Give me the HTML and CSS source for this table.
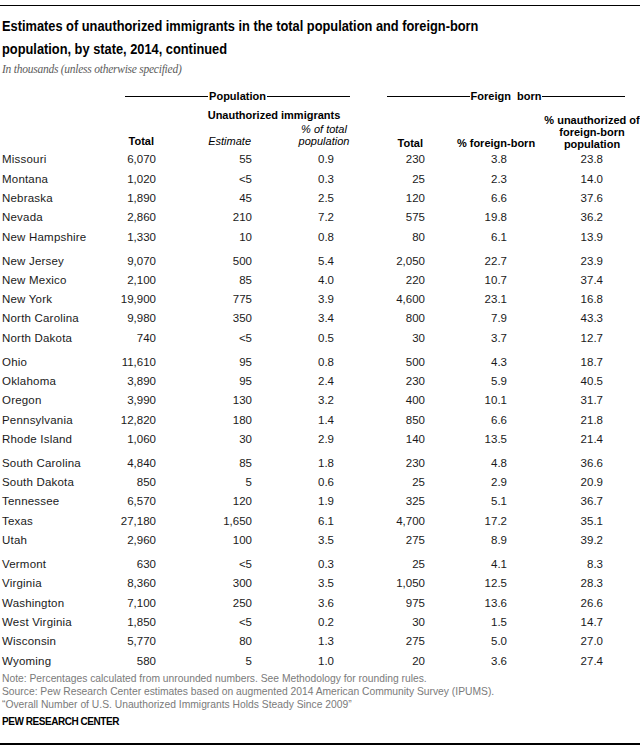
FILE: index.html
```html
<!DOCTYPE html>
<html lang="en">
<head>
<meta charset="utf-8">
<title>Unauthorized immigrants by state, 2014, continued</title>
<link rel="stylesheet" href="styles.css">
</head>
<body>
<div class="page">
  <h1 class="title">Estimates of unauthorized immigrants in the total population and foreign-born<br>population, by state, 2014, continued</h1>
  <p class="subtitle">In thousands (unless otherwise specified)</p>

  <div class="groups">
    <div class="group-label group-pop"><span class="rule"></span><span class="glabel">Population</span><span class="rule"></span></div>
    <div class="group-label group-fb"><span class="rule"></span><span class="glabel">Foreign&nbsp; born</span><span class="rule"></span></div>
  </div>

  <div class="head">
    <div class="h-name"></div>
    <div class="h-total">Total</div>
    <div class="h-unauth">
      <div class="h-unauth-title">Unauthorized immigrants</div>
      <div class="h-unauth-cols">
        <div class="h-est">Estimate</div>
        <div class="h-pct">% of total<br>population</div>
      </div>
    </div>
    <div class="h-fbtotal">Total</div>
    <div class="h-fbpct">% foreign-born</div>
    <div class="h-fbun">% unauthorized of<br>foreign-born<br>population</div>
  </div>

  <div class="body">
    <div class="grp">
      <div class="row"><span class="st">Missouri</span><span>6,070</span><span>55</span><span>0.9</span><span>230</span><span>3.8</span><span>23.8</span></div>
      <div class="row"><span class="st">Montana</span><span>1,020</span><span>&lt;5</span><span>0.3</span><span>25</span><span>2.3</span><span>14.0</span></div>
      <div class="row"><span class="st">Nebraska</span><span>1,890</span><span>45</span><span>2.5</span><span>120</span><span>6.6</span><span>37.6</span></div>
      <div class="row"><span class="st">Nevada</span><span>2,860</span><span>210</span><span>7.2</span><span>575</span><span>19.8</span><span>36.2</span></div>
      <div class="row"><span class="st">New Hampshire</span><span>1,330</span><span>10</span><span>0.8</span><span>80</span><span>6.1</span><span>13.9</span></div>
    </div>
    <div class="grp">
      <div class="row"><span class="st">New Jersey</span><span>9,070</span><span>500</span><span>5.4</span><span>2,050</span><span>22.7</span><span>23.9</span></div>
      <div class="row"><span class="st">New Mexico</span><span>2,100</span><span>85</span><span>4.0</span><span>220</span><span>10.7</span><span>37.4</span></div>
      <div class="row"><span class="st">New York</span><span>19,900</span><span>775</span><span>3.9</span><span>4,600</span><span>23.1</span><span>16.8</span></div>
      <div class="row"><span class="st">North Carolina</span><span>9,980</span><span>350</span><span>3.4</span><span>800</span><span>7.9</span><span>43.3</span></div>
      <div class="row"><span class="st">North Dakota</span><span>740</span><span>&lt;5</span><span>0.5</span><span>30</span><span>3.7</span><span>12.7</span></div>
    </div>
    <div class="grp">
      <div class="row"><span class="st">Ohio</span><span>11,610</span><span>95</span><span>0.8</span><span>500</span><span>4.3</span><span>18.7</span></div>
      <div class="row"><span class="st">Oklahoma</span><span>3,890</span><span>95</span><span>2.4</span><span>230</span><span>5.9</span><span>40.5</span></div>
      <div class="row"><span class="st">Oregon</span><span>3,990</span><span>130</span><span>3.2</span><span>400</span><span>10.1</span><span>31.7</span></div>
      <div class="row"><span class="st">Pennsylvania</span><span>12,820</span><span>180</span><span>1.4</span><span>850</span><span>6.6</span><span>21.8</span></div>
      <div class="row"><span class="st">Rhode Island</span><span>1,060</span><span>30</span><span>2.9</span><span>140</span><span>13.5</span><span>21.4</span></div>
    </div>
    <div class="grp">
      <div class="row"><span class="st">South Carolina</span><span>4,840</span><span>85</span><span>1.8</span><span>230</span><span>4.8</span><span>36.6</span></div>
      <div class="row"><span class="st">South Dakota</span><span>850</span><span>5</span><span>0.6</span><span>25</span><span>2.9</span><span>20.9</span></div>
      <div class="row"><span class="st">Tennessee</span><span>6,570</span><span>120</span><span>1.9</span><span>325</span><span>5.1</span><span>36.7</span></div>
      <div class="row"><span class="st">Texas</span><span>27,180</span><span>1,650</span><span>6.1</span><span>4,700</span><span>17.2</span><span>35.1</span></div>
      <div class="row"><span class="st">Utah</span><span>2,960</span><span>100</span><span>3.5</span><span>275</span><span>8.9</span><span>39.2</span></div>
    </div>
    <div class="grp">
      <div class="row"><span class="st">Vermont</span><span>630</span><span>&lt;5</span><span>0.3</span><span>25</span><span>4.1</span><span>8.3</span></div>
      <div class="row"><span class="st">Virginia</span><span>8,360</span><span>300</span><span>3.5</span><span>1,050</span><span>12.5</span><span>28.3</span></div>
      <div class="row"><span class="st">Washington</span><span>7,100</span><span>250</span><span>3.6</span><span>975</span><span>13.6</span><span>26.6</span></div>
      <div class="row"><span class="st">West Virginia</span><span>1,850</span><span>&lt;5</span><span>0.2</span><span>30</span><span>1.5</span><span>14.7</span></div>
      <div class="row"><span class="st">Wisconsin</span><span>5,770</span><span>80</span><span>1.3</span><span>275</span><span>5.0</span><span>27.0</span></div>
      <div class="row"><span class="st">Wyoming</span><span>580</span><span>5</span><span>1.0</span><span>20</span><span>3.6</span><span>27.4</span></div>
    </div>
  </div>

  <div class="notes">
    <p>Note: Percentages calculated from unrounded numbers. See Methodology for rounding rules.</p>
    <p>Source: Pew Research Center estimates based on augmented 2014 American Community Survey (IPUMS).</p>
    <p>“Overall Number of U.S. Unauthorized Immigrants Holds Steady Since 2009”</p>
  </div>
  <div class="brand">PEW RESEARCH CENTER</div>
</div>
</body>
</html>
```

FILE: styles.css
```css
* { box-sizing: border-box; }
html, body { margin: 0; padding: 0; background: #fff; }
body {
  font-family: "Liberation Sans", Arial, sans-serif;
  color: #1a1a1a;
  width: 640px;
}
.page {
  margin-top: 5px;
  border-top: 1px solid #000;
  border-bottom: 2px solid #000;
  padding: 0 0 0 2px;
}
.title {
  margin: 9px 0 0 0;
  font-family: "Liberation Sans", Arial, sans-serif;
  font-weight: bold;
  font-size: 15.5px;
  line-height: 22.6px;
  color: #000;
  transform: scaleX(0.827);
  transform-origin: left top;
  white-space: nowrap;
}
.subtitle {
  margin: 2px 0 0 0;
  font-family: "Liberation Serif", "DejaVu Serif", serif;
  font-style: italic;
  font-size: 11.5px;
  line-height: 14px;
  color: #5c5c5c;
  letter-spacing: -0.25px;
}

/* group labels with rules */
.groups {
  display: flex;
  margin-top: 14px;
  height: 13px;
  font-size: 11px;
  font-weight: bold;
  color: #000;
}
.group-label {
  display: flex;
  align-items: center;
}
.group-pop { margin-left: 123px; width: 225px; }
.group-fb { margin-left: 37px; width: 238px; }
.group-label .rule {
  flex: 1;
  height: 1px;
  background: #000;
}
.glabel { padding: 0 1px; line-height: 13px; }

/* column header */
.head {
  display: grid;
  grid-template-columns: 110px 44px 240px 52px 96px 96px;
  align-items: end;
  font-size: 11px;
  line-height: 12.5px;
  color: #000;
  margin-top: 6px;
}
.h-total, .h-fbtotal, .h-fbpct, .h-fbun, .h-unauth-title { font-weight: bold; }
.h-total { text-align: right; padding-right: 2px; padding-bottom: 2px; }
.h-unauth { display: flex; flex-direction: column; padding-bottom: 2px; }
.h-unauth-title { text-align: center; padding-right: 4px; margin-bottom: 1px; }
.h-unauth-cols {
  display: grid;
  grid-template-columns: 96px 144px;
  align-items: end;
  font-style: italic;
}
.h-est { text-align: right; padding-right: 1px; }
.h-pct { text-align: center; }
.h-fbtotal { text-align: right; padding-right: 25px; }
.h-fbpct { text-align: center; }
.h-fbun { text-align: center; line-height: 12px; }

/* body rows */
.body { margin-top: 0; }
.grp + .grp { margin-top: 4.7px; }
.row {
  display: grid;
  grid-template-columns: 108px 46px 96px 82px 91px 82px 96px;
  height: 19.3px;
  align-items: center;
  font-size: 11.5px;
  color: #1a1a1a;
}
.row span { text-align: right; }
.row .st { text-align: left; letter-spacing: 0.2px; }

.notes {
  margin-top: 2px;
  font-size: 10.3px;
  line-height: 13px;
  color: #7a7a7a;
}
.notes p { margin: 0; }
.brand {
  margin-top: 4px;
  font-size: 10px;
  font-weight: bold;
  line-height: 13px;
  color: #000;
  letter-spacing: -0.45px;
  padding-bottom: 15px;
}
```
